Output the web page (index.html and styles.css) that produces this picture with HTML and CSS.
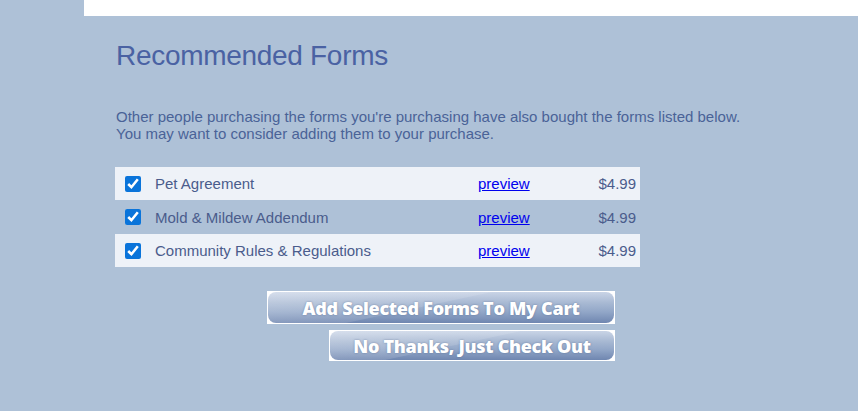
FILE: index.html
```html
<!DOCTYPE html>
<html>
<head>
<meta charset="utf-8">
<link rel="stylesheet" href="styles.css">
</head>
<body>
<div class="topbar"></div>
<main class="content">
  <h1 class="title">Recommended Forms</h1>
  <p class="intro">Other people purchasing the forms you're purchasing have also bought the forms listed below.<br>You may want to consider adding them to your purchase.</p>
  <div class="forms">
    <div class="row alt">
      <span class="chk"><input type="checkbox" checked></span>
      <span class="name">Pet Agreement</span>
      <a class="preview" href="#">preview</a>
      <span class="price">$4.99</span>
    </div>
    <div class="row mid">
      <span class="chk"><input type="checkbox" checked></span>
      <span class="name">Mold &amp; Mildew Addendum</span>
      <a class="preview" href="#">preview</a>
      <span class="price">$4.99</span>
    </div>
    <div class="row alt">
      <span class="chk"><input type="checkbox" checked></span>
      <span class="name">Community Rules &amp; Regulations</span>
      <a class="preview" href="#">preview</a>
      <span class="price">$4.99</span>
    </div>
  </div>
  <div class="actions">
    <button class="imgbtn add"><span class="face">Add Selected Forms To My Cart</span></button>
    <button class="imgbtn skip"><span class="face">No Thanks, Just Check Out</span></button>
  </div>
</main>
</body>
</html>
```

FILE: styles.css
```css
html, body {
  margin: 0;
  padding: 0;
}
body {
  background: #aec1d7;
  font-family: Arial, "Liberation Sans", sans-serif;
  width: 858px;
  height: 411px;
  overflow: hidden;
}
.topbar {
  margin-left: 84px;
  height: 16px;
  background: #ffffff;
}
.content {
  padding-left: 115px;
}
.title {
  margin: 22px 0 0 1px;
  font-size: 28px;
  font-weight: normal;
  color: #4a62a3;
  letter-spacing: -0.3px;
  line-height: 36px;
}
.intro {
  margin: 34px 0 0 1px;
  font-size: 15px;
  line-height: 17px;
  color: #4a6397;
}
.forms {
  margin-top: 25px;
  width: 525px;
}
.row {
  display: flex;
  align-items: center;
  height: 33px;
  font-size: 15px;
  color: #4a5c8c;
}
.row.mid {
  height: 34px;
}
.row.alt {
  background: #eef2f8;
}
.chk {
  width: 40px;
  display: flex;
  padding-left: 10px;
  box-sizing: border-box;
}
.chk input {
  margin: 0;
  width: 16px;
  height: 16px;
  accent-color: #0a74da;
}
.name {
  width: 323px;
}
.preview {
  width: 80px;
  color: #0000ee;
  text-decoration: underline;
}
.price {
  flex: 1;
  text-align: right;
  padding-right: 4px;
}
.actions {
  margin-top: 24px;
  width: 500px;
  display: flex;
  flex-direction: column;
  align-items: flex-end;
  gap: 6px;
}
.imgbtn {
  border: 0;
  padding: 1px;
  background: #ffffff;
  cursor: pointer;
  display: flex;
}
.face {
  flex: 1;
  display: flex;
  align-items: center;
  justify-content: center;
  border-radius: 8px;
  background:
    linear-gradient(168deg, rgba(255,255,255,0.25) 0%, rgba(255,255,255,0.12) 45%, rgba(255,255,255,0) 46%),
    linear-gradient(#c9d4e6 0%, #a8b9d3 35%, #91a6c7 65%, #6f86b0 100%);
  color: #ffffff;
  font-family: "Open Sans", "DejaVu Sans", sans-serif;
  font-weight: 800;
  font-size: 18px;
  letter-spacing: -0.3px;
  text-shadow: 0 0 2px rgba(70, 90, 130, 0.6);
}
.add {
  width: 348px;
  height: 33px;
}
.skip {
  width: 286px;
  height: 31px;
}
```
